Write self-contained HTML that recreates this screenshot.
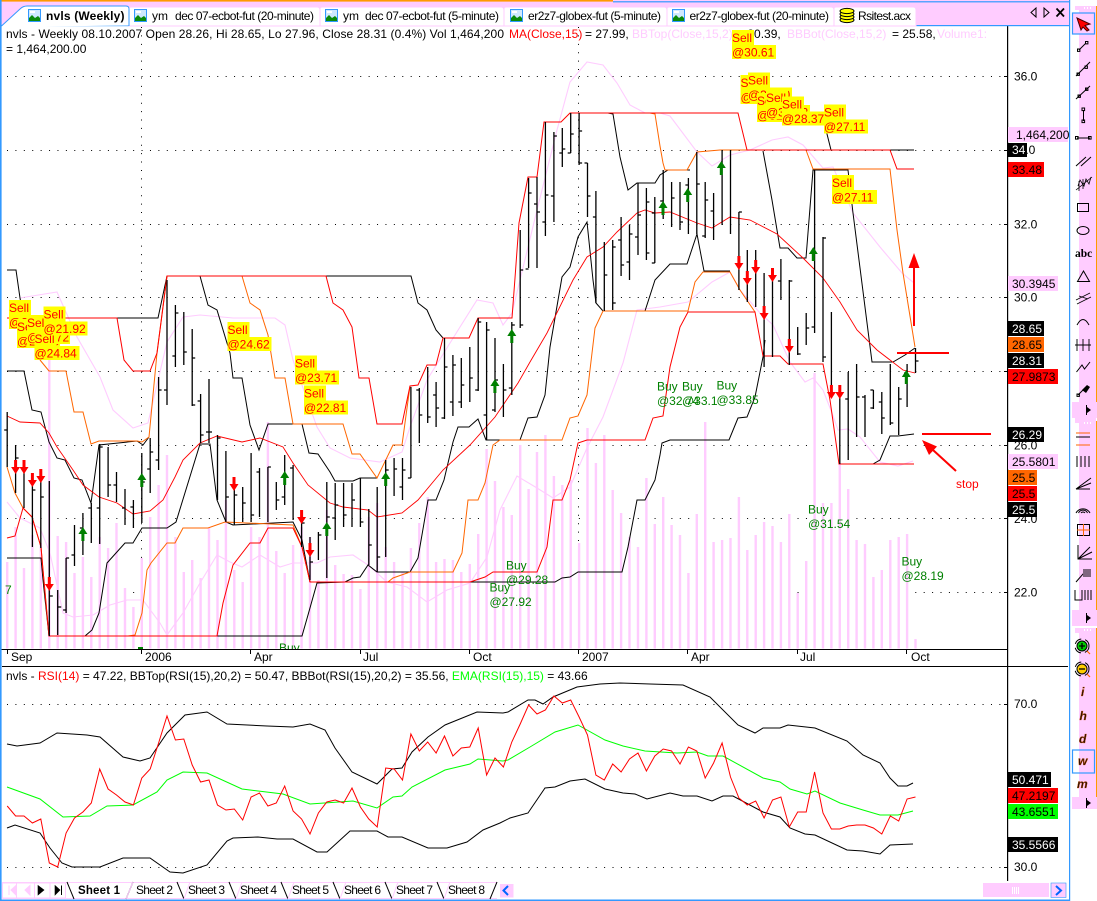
<!DOCTYPE html>
<html><head><meta charset="utf-8"><title>nvls (Weekly)</title>
<style>
html,body{margin:0;padding:0;background:#fff;width:1097px;height:901px;overflow:hidden}
svg{position:absolute;left:0;top:0;display:block}
text{font-family:"Liberation Sans",sans-serif;font-size:12px;fill:#000}
.l{fill:none;stroke-linejoin:miter}
.k{stroke:#000;stroke-width:1}
.r{stroke:#f00;stroke-width:1}
.o{stroke:#f60;stroke-width:1}
.p{stroke:#fcf;stroke-width:1.1}
.g{stroke:#0f0;stroke-width:1}
.s{fill:#f00}.b{fill:#008000}
.y{fill:#ff0}
.ic{fill:none;stroke:#000;stroke-width:1}
</style></head><body>
<svg width="1097" height="901" viewBox="0 0 1097 901" xmlns="http://www.w3.org/2000/svg">
<defs>
<polygon id="ad" points="-1.5,0 1.5,0 1.5,7 4.5,7 0,14 -4.5,7 -1.5,7" fill="#f00"/>
<polygon id="au" points="0,0 4.5,7 1.5,7 1.5,14 -1.5,14 -1.5,7 -4.5,7" fill="#008000"/>
<g id="tic"><rect x="0.5" y="0.5" width="12" height="12" fill="#cfe8ff" stroke="#39f"/><polygon points="1,12 1,9 4,6 7,9 10,7 12,9 12,12" fill="#0a8a0a"/><rect x="2" y="2" width="5" height="2" fill="#fff"/></g>
</defs>
<rect width="1097" height="901" fill="#fff"/>

<!-- grid -->
<g stroke="#000" stroke-width="1" stroke-dasharray="1 7.41" fill="none">
<path d="M7 76.5H1004M7 150.5H1004M7 224.5H1004M7 297.5H1004M7 371.5H1004M7 445.5H1004M7 518.5H1004M7 592.5H1004M7 704.5H1004M7 867.5H1004"/>
<path d="M141.5 27V649M578.5 27V649"/>
</g>

<!-- volume -->
<path fill="none" stroke="#fcf" stroke-width="2.4" d="M7.2 562V648.5M15.6 527V648.5M24 568V648.5M32.4 535V648.5M40.8 543V648.5M49.3 350V648.5M57.7 536V648.5M66.1 542V648.5M74.5 573V648.5M82.9 557V648.5M91.3 577V648.5M99.7 537V648.5M108.1 548V648.5M116.5 523V648.5M125 588V648.5M133.4 607V648.5M141.8 558V648.5M150.2 517V648.5M158.6 485V648.5M167 455V648.5M175.4 537V648.5M183.8 572V648.5M192.2 560V648.5M200.6 578V648.5M209 528V648.5M217.5 540V648.5M225.9 500V648.5M234.3 570V648.5M242.7 582V648.5M251.1 527V648.5M259.5 537V648.5M267.9 422V648.5M276.3 551V648.5M284.7 573V648.5M293.1 545V648.5M301.6 527V648.5M310 537V648.5M318.4 580V648.5M326.8 510V648.5M335.2 565V648.5M343.6 574V648.5M352 575V648.5M360.4 589V648.5M368.8 517V648.5M377.2 503V648.5M385.7 547V648.5M394.1 562V648.5M402.5 572V648.5M410.9 548V648.5M419.3 523V648.5M427.7 497V648.5M436.1 562V648.5M444.5 559V648.5M452.9 560V648.5M461.3 572V648.5M469.8 564V648.5M478.2 534V648.5M486.6 449V648.5M495 481V648.5M503.4 507V648.5M511.8 515V648.5M520.2 445V648.5M528.6 489V648.5M537 452V648.5M545.4 435V648.5M553.9 476V648.5M562.3 485V648.5M570.7 480V648.5M579.1 543V648.5M587.5 428V648.5M595.9 463V648.5M604.3 435V648.5M612.7 490V648.5M621.1 513V648.5M629.5 537V648.5M638 547V648.5M646.4 478V648.5M654.8 524V648.5M663.2 497V648.5M671.6 525V648.5M680 535V648.5M688.4 573V648.5M696.8 514V648.5M705.2 422V648.5M713.6 542V648.5M722.1 540V648.5M730.5 538V648.5M738.9 497V648.5M747.3 550V648.5M755.7 535V648.5M764.1 522V648.5M772.5 526V648.5M780.9 542V648.5M789.3 514V648.5M797.7 593V648.5M806.2 561V648.5M814.6 373V648.5M823 503V648.5M831.4 503V648.5M839.8 463V648.5M848.2 489V648.5M856.6 540V648.5M865 544V648.5M873.4 577V648.5M881.8 570V648.5M890.3 540V648.5M898.7 537V648.5M907.1 534V648.5M915.5 639V648.5"/>

<!-- pink bands -->
<polyline class="l p" points="20,298 57,292 77,337 100,377 113,410 133,428 148,423 167,342 183,317 200,315 233,318 275,318 285,325 293,360 317,427 330,448 350,458 380,462 402,452 410,427 427,380 460,327 477,300 493,303 503,325 512,313 520,280 537,210 557,130 570,82 587,62 603,65 617,83 630,105 645,113 660,113 670,116 697,152 712,166 730,155 750,150 772,140 788,137 803,145 823,168 833,167 853,213 880,247 902,273 914,283"/>
<polyline class="l p" points="7,502 20,518 40,528 50,553 63,613 73,617 93,615 110,605 127,600 143,600 160,623 167,635 183,613 200,583 217,555 230,562 242,567 260,555 280,567 293,563 317,563 330,557 353,555 368,565 387,582 407,587 427,602 447,590 470,583 487,557 500,510 517,476 537,488 553,498 570,487 587,448 603,417 623,363 637,310 660,307 688,302 712,282 730,272 740,290 760,313 773,325 790,362 805,382 813,378 823,390 832,413 838,430 848,429 860,437 880,462 898,466 913,461"/>

<!-- black bands -->
<polyline class="l k" points="7,270 16,270 20,298 24,318 117,318 158,318 167,276 200,276 208,305 217,310 230,353 233,378 242,378 250,425 259,450 268,424 302,424 309,453 318,454 330,472 335,481 353,481 360,478 377,478"/>
<polyline class="l k" points="326,276 411,276 418,303 427,310 436,330 443,338"/>
<polyline class="l k" points="7,371 24,371 32,410 41,412 49,442 57,458 65,460 74,478 82,480 91,503 99,445 137,441 143,445 149,437"/>
<polyline class="l k" points="7,558 41,558 43,580 49,636 85,636 92,630 99,613 107,563 125,543 133,543 142,528 167,528 176,522 200,444 210,444 217,500 226,522 233,525 293,522 302,540 310,582"/>
<polyline class="l k" points="217,636 302,636 308,615 317,583 345,582 353,578 360,577 368,565 377,572 410,572 418,558 428,500 436,500 444,480 453,442 458,427 469,427 478,419 486,440 520,440 528,418 537,417 545,395 550,347 562,277 570,267 578,237 587,222 593,280 596,303 603,311 645,311 655,280 670,264 687,264 697,234 704,271 730,271"/>
<polyline class="l k" points="470,582 555,582 562,578 570,577 578,572 622,572 628,547 637,500 645,500 655,480 660,455 662,443 670,440 729,440 738,418 747,417 755,397 763,357 765,340"/>
<polyline class="l k" points="873,464 880,460 890,436 898,436 914,434"/>
<polyline class="l k" points="608,113 613,114 620,157 628,190 637,183 655,183 660,175 668,170 690,170"/>
<polyline class="l k" points="763,151 772,200 780,248 788,248 797,258 806,258 813,170 848,170 853,213 872,362 893,362 905,355 915,348"/>
<polyline class="l k" points="826,130 831,150 914,150"/>

<!-- orange -->
<polyline class="l o" points="7,467 15,493 23,508 32,517 41,547 43,570 49,636"/>
<polyline class="l o" points="40,360 49,371 66,371 74,412 83,412 91,444 99,441 137,441 142,442 149,437 157,353 167,276"/>
<polyline class="l o" points="242,276 250,303 260,310 268,335 275,378 285,378 293,424 343,424 352,454 360,454 377,478 393,445 402,445 410,386"/>
<polyline class="l o" points="128,636 135,635 142,613 147,570 151,563 167,543 175,543 183,528 208,528 225,522 293,525 302,547 310,582"/>
<polyline class="l o" points="388,582 393,578 410,572 453,572 462,553 468,500 478,500 485,483 493,445 500,440 562,440 570,418 578,416 587,395 595,328 603,311 660,311 688,311 695,282 703,272 730,272 740,290 755,312"/>
<polyline class="l o" points="650,113 655,114 660,146 663,163 665,170 687,170 697,152 720,150 747,150"/>
<polyline class="l o" points="806,150 813,169 890,169 897,230 903,273 915,347"/>

<!-- red bands -->
<polyline class="l r" points="7,538 15,536 23,508 32,517 41,547 43,570 49,636 217,636 223,603 233,565 250,543 260,543 268,528 293,528 302,547 310,582 470,582 485,577 493,572 537,572 547,547 553,500 562,500 570,480 578,443 587,440 645,440 653,418 663,416 670,367 680,327 688,312 755,312 763,356 780,356 788,364 823,364 830,400 839,464 914,464"/>
<polyline class="l r" points="7,318 117,318 124,360 133,371 150,371 157,353 167,276 326,276 333,303 343,310 352,327 359,378 369,378 377,424 402,424 410,386 418,385 427,365 436,365 443,338 469,338 478,318 512,318 515,278 519,223 528,177 537,177 544,122 561,122 570,113 738,113 747,150 890,150 897,169 914,169"/>
<polyline class="l" stroke="#f00" stroke-width=".9" points="7,416 20,422 40,423 49,433 57,447 73,470 83,485 99,497 117,503 133,514 150,511 163,500 175,477 183,460 200,443 217,436 242,442 260,438 283,447 293,463 308,485 330,503 343,507 368,510 377,517 402,513 418,500 443,470 470,445 495,417 518,383 530,362 547,333 573,280 587,257 603,247 617,232 637,213 645,210 655,213 670,212 697,223 712,228 730,217 750,220 777,234 803,258 823,278 840,302 857,330 877,350 903,370 915,373"/>

<!-- price bars -->
<path fill="none" stroke="#000" stroke-width="1.3" d="M7.2 412V467M7.2 430h-3M15.6 445V493M15.6 458h3M24 460V508M32.4 473V547M32.4 490h3M40.8 470V548M40.8 497h3M49.3 481V636M49.3 596h3.5M57.7 590V635M57.7 607h3.5M66.1 558V613M66.1 610h-3M66.1 558h3M74.5 525V566M74.5 555h-3M82.9 513V555M82.9 528h-3M91.3 503V543M91.3 508h-3M99.7 444V544M99.7 508h-3M99.7 447h3M108.1 447V497M108.1 485h3M116.5 472V502M116.5 485h-3M125 489V525M125 508h-3M133.4 500V528M133.4 507h-3M141.8 453V523M141.8 482h3M150.2 438V493M150.2 469h-3M150.2 452h3M158.6 377V470M158.6 460h-3M158.6 390h3M167 280V405M167 390h-3M175.4 305V367M175.4 313h3M175.4 356h-3M183.8 312V365M183.8 352h3M192.2 329V406M192.2 358h3M192.2 405h3M200.6 394V443M200.6 401h-3M200.6 435h3M209 379V443M209 432h-3M209 432h3M217.5 435V500M217.5 438h3M225.9 451V522M225.9 497h3M234.3 487V525M234.3 495h3M242.7 487V522M242.7 503h3M251.1 453V522M251.1 515h3M259.5 468V517M259.5 472h-3M267.9 467V522M267.9 467h3M276.3 482V510M276.3 500h3M284.7 455V505M284.7 497h-3M293.1 465V520M293.1 468h-3M301.6 515V547M301.6 523h3M310 537V580M310 562h3M318.4 532V560M318.4 535h3M326.8 482V578M326.8 517h3M335.2 483V540M335.2 505h3M335.2 518h-3M343.6 483V527M343.6 515h3M352 483V527M352 500h3M360.4 478V527M360.4 522h3M368.8 509V565M368.8 545h3M377.2 487V572M377.2 557h3M385.7 460V557M385.7 470h3M394.1 458V496M394.1 469h3M402.5 458V500M402.5 487h-3M402.5 470h3M410.9 387V478M410.9 478h-3M419.3 388V443M419.3 415h3M419.3 390h-3M427.7 367V423M427.7 417h3M436.1 382V427M436.1 408h3M436.1 395h-3M444.5 338V419M444.5 367h3M444.5 418h-3M452.9 355V416M452.9 402h-3M452.9 365h3M461.3 358V408M461.3 385h3M461.3 402h-3M469.8 347V402M469.8 378h3M478.2 318V391M478.2 322h3M478.2 390h-3M486.6 322V440M486.6 330h3M486.6 415h-3M495 338V412M495 380h3M495 410h-3M503.4 364V417M503.4 390h3M511.8 322V395M511.8 325h3M511.8 388h-3M520.2 230V328M520.2 325h3M520.2 270h3M528.6 178V268M528.6 193h3M528.6 269h-3M537 177V268M537 204h-3M537 212h3M545.4 122V236M545.4 195h3M545.4 222h-3M553.9 132V222M553.9 136h3M553.9 196h-3M562.3 128V167M562.3 149h3M562.3 153h-3M570.7 113V153M570.7 134h3M570.7 153h-3M579.1 113V165M579.1 131h3M579.1 163h3M587.5 163V217M587.5 163h-3M587.5 196h3M595.9 191V303M595.9 217h-3M604.3 242V311M604.3 275h3M612.7 240V310M612.7 247h3M612.7 303h3M621.1 217V276M621.1 240h-3M621.1 265h3M629.5 225V280M629.5 234h3M629.5 262h-3M638 183V255M638 237h-3M638 215h3M646.4 188V260M646.4 202h3M646.4 253h3M654.8 197V263M654.8 213h-3M654.8 263h-3M663.2 170V219M663.2 201h-3M671.6 182V227M671.6 198h3M680 182V230M680 222h3M688.4 178V234M688.4 185h-3M696.8 152V234M696.8 184h3M705.2 182V238M705.2 236h-3M705.2 200h3M713.6 193V240M713.6 211h-3M722.1 150V225M730.5 150V234M738.9 212V290M738.9 212h3M747.3 250V302M755.7 250V307M764.1 273V367M772.5 275V357M780.9 259V300M780.9 281h-3M789.3 280V365M789.3 281h3M797.7 327V355M797.7 354h3M806.2 313V345M806.2 328h3M814.6 170V333M814.6 327h-3M823 237V362M823 238h3M823 357h3M831.4 312V398M839.8 387V464M848.2 372V460M848.2 399h-3M856.6 364V437M856.6 397h3M865 395V437M865 397h-3M873.4 390V409M873.4 390h-3M873.4 408h-3M881.8 392V434M881.8 418h3M881.8 402h-3M890.3 364V425M890.3 423h3M898.7 387V435M898.7 399h3M907.1 364V407M907.1 373h-3M915.5 348V373M915.5 361h3"/>

<!-- signal arrows -->
<use href="#ad" x="15.6" y="460"/><use href="#ad" x="24" y="460"/><use href="#ad" x="32.4" y="473"/><use href="#ad" x="40.8" y="469"/><use href="#ad" x="49.3" y="577"/><use href="#ad" x="234" y="477"/><use href="#ad" x="301.6" y="510"/><use href="#ad" x="310" y="543"/><use href="#ad" x="738.9" y="256"/><use href="#ad" x="747.3" y="271"/><use href="#ad" x="755.7" y="260"/><use href="#ad" x="772.5" y="268"/><use href="#ad" x="764.1" y="306"/><use href="#ad" x="789.3" y="339"/><use href="#ad" x="831.4" y="385"/><use href="#ad" x="839.8" y="385"/>
<use href="#au" x="82.9" y="527"/><use href="#au" x="141.8" y="473"/><use href="#au" x="284.7" y="471"/><use href="#au" x="326.8" y="522"/><use href="#au" x="385.7" y="472"/><use href="#au" x="494.9" y="379"/><use href="#au" x="511.8" y="329"/><use href="#au" x="663" y="201"/><use href="#au" x="687.7" y="188"/><use href="#au" x="721.3" y="161"/><use href="#au" x="813.3" y="247"/><use href="#au" x="906.3" y="370"/>

<!-- hand drawn annotations -->
<g fill="#f00" stroke="none">
<rect x="913" y="266" width="2" height="60"/><polygon points="914,253 919.5,268 908.5,268"/>
<rect x="897" y="352" width="52" height="2"/>
<rect x="922" y="433" width="69" height="2"/>
<polygon points="922,440 937,446.5 929,455"/>
</g>
<path d="M933 450L956 471" stroke="#f00" stroke-width="2" fill="none"/>
<text x="956" y="488" style="fill:#f00">stop</text>

<!-- legend -->
<text x="6" y="38" textLength="498">nvls - Weekly 08.10.2007 Open 28.26, Hi 28.65, Lo 27.96, Close 28.31 (0.4%) Vol 1,464,200</text>
<text x="509" y="38" style="fill:#f00">MA(Close,15)</text>
<text x="585" y="38">= 27.99,</text>
<text x="632" y="38" style="fill:#fcf">BBTop(Close,15,2)</text>
<text x="737" y="38">= 30.39,</text>
<text x="787" y="38" style="fill:#fcf">BBBot(Close,15,2)</text>
<text x="892" y="38">= 25.58,</text>
<text x="937" y="38" style="fill:#fcf">Volume1:</text>
<text x="6" y="53">= 1,464,200.00</text>

<!-- Sell labels -->
<g transform="translate(9,300)"><rect class="y" width="22" height="15"/><rect class="y" y="15" width="43" height="14"/><text class="s" y="12">Sell</text><text class="s" y="26.5">@21.93</text></g>
<g transform="translate(17,319)"><rect class="y" width="22" height="15"/><rect class="y" y="15" width="43" height="14"/><text class="s" y="12">Sell</text><text class="s" y="26.5">@23.45</text></g>
<g transform="translate(27,315)"><rect class="y" width="22" height="15"/><rect class="y" y="15" width="43" height="14"/><text class="s" y="12">Sell</text><text class="s" y="26.5">@25.72</text></g>
<g transform="translate(34.5,331)"><rect class="y" width="22" height="15"/><rect class="y" y="15" width="45" height="14"/><text class="s" y="12">Sell</text><text class="s" y="26.5">@24.84</text></g>
<g transform="translate(43.5,306.5)"><rect class="y" width="22" height="15"/><rect class="y" y="15" width="44" height="14"/><text class="s" y="12">Sell</text><text class="s" y="26.5">@21.92</text></g>
<g transform="translate(227.5,322)"><rect class="y" width="22" height="15"/><rect class="y" y="15" width="44" height="14"/><text class="s" y="12">Sell</text><text class="s" y="26.5">@24.62</text></g>
<g transform="translate(295,355.5)"><rect class="y" width="22" height="15"/><rect class="y" y="15" width="44" height="14"/><text class="s" y="12">Sell</text><text class="s" y="26.5">@23.71</text></g>
<g transform="translate(304,385.5)"><rect class="y" width="22" height="15"/><rect class="y" y="15" width="44" height="14"/><text class="s" y="12">Sell</text><text class="s" y="26.5">@22.81</text></g>
<g transform="translate(732,30)"><rect class="y" width="22" height="15"/><rect class="y" y="15" width="44" height="14"/><text class="s" y="12">Sell</text><text class="s" y="26.5">@30.61</text></g>
<g transform="translate(740.5,75)"><rect class="y" width="22" height="15"/><rect class="y" y="15" width="44" height="14"/><text class="s" y="12">Sell</text><text class="s" y="26.5">@30.39</text></g>
<g transform="translate(748,72.5)"><rect class="y" width="22" height="15"/><rect class="y" y="15" width="44" height="14"/><text class="s" y="12">Sell</text><text class="s" y="26.5">@31.20</text></g>
<g transform="translate(757,93)"><rect class="y" width="22" height="15"/><rect class="y" y="15" width="44" height="14"/><text class="s" y="12">Sell</text><text class="s" y="26.5">@31.58</text></g>
<g transform="translate(766,90)"><rect class="y" width="22" height="15"/><rect class="y" y="15" width="44" height="14"/><text class="s" y="12">Sell</text><text class="s" y="26.5">@30.02</text></g>
<g transform="translate(782,96.5)"><rect class="y" width="22" height="15"/><rect class="y" y="15" width="44" height="14"/><text class="s" y="12">Sell</text><text class="s" y="26.5">@28.37</text></g>
<g transform="translate(824,104.5)"><rect class="y" width="22" height="15"/><rect class="y" y="15" width="44" height="14"/><text class="s" y="12">Sell</text><text class="s" y="26.5">@27.11</text></g>
<g transform="translate(832,175)"><rect class="y" width="22" height="15"/><rect class="y" y="15" width="45" height="14"/><text class="s" y="12">Sell</text><text class="s" y="26.5">@27.11</text></g>

<!-- Buy labels -->
<g transform="translate(506,557.5)"><text class="b" y="12">Buy</text><text class="b" y="26.5">@29.28</text></g>
<g transform="translate(489.5,579.5)"><text class="b" y="12">Buy</text><text class="b" y="26.5">@27.92</text></g>
<g transform="translate(657,378.5)"><text class="b" y="12">Buy</text><text class="b" y="26.5">@32.74</text></g>
<g transform="translate(682,378.5)"><text class="b" y="12">Buy</text><text class="b" y="26.5">@33.1</text></g>
<g transform="translate(716.5,377.5)"><text class="b" y="12">Buy</text><text class="b" y="26.5">@33.85</text></g>
<g transform="translate(808,501.5)"><text class="b" y="12">Buy</text><text class="b" y="26.5">@31.54</text></g>
<g transform="translate(901.5,553.5)"><text class="b" y="12">Buy</text><text class="b" y="26.5">@28.19</text></g>
<text class="b" x="5" y="594">7</text>
<g><clipPath id="cb"><rect x="270" y="630" width="40" height="19"/></clipPath><text class="b" x="279" y="652" clip-path="url(#cb)">Buy</text></g>

<!-- frame lines, time axis -->
<rect x="1" y="649" width="1006" height="1" fill="#000"/>
<rect x="2" y="666" width="1066" height="1" fill="#000"/>
<rect x="1007" y="25" width="1.2" height="856" fill="#000"/>
<path stroke="#000" fill="none" d="M7.5 649V654M141.5 649V654M250.5 649V654M360.5 649V654M469.5 649V654M578.5 649V654M687.5 649V654M797.5 649V654M906.5 649V654"/>
<rect x="138" y="647" width="5" height="2" fill="#008000"/>
<text x="11" y="661">Sep</text><text x="145" y="661">2006</text><text x="254" y="661">Apr</text><text x="363" y="661">Jul</text><text x="473" y="661">Oct</text><text x="582" y="661">2007</text><text x="691" y="661">Apr</text><text x="800" y="661">Jul</text><text x="911" y="661">Oct</text>

<!-- RSI pane -->
<text y="680" x="6">nvls - <tspan style="fill:#f00">RSI(14)</tspan> = 47.22, BBTop(RSI(15),20,2) = 50.47, BBBot(RSI(15),20,2) = 35.56, <tspan style="fill:#0f0">EMA(RSI(15),15)</tspan> = 43.66</text>
<polyline class="l k" points="7,744 17,746 40,743 57,733 87,735 100,737 123,757 140,761 150,758 167,733 185,715 207,712 227,724 267,726 293,727 310,724 325,730 335,748 352,772 377,784 392,769 402,768 412,752 428,737 445,725 477,712 503,713 508,712 528,700 535,700 543,704 553,697 577,687 600,684 620,683 650,684 683,685 710,697 738,725 755,733 763,728 780,728 788,725 815,728 847,741 863,755 880,763 890,778 898,786 907,786 913,783"/>
<polyline class="l k" points="7,828 15,825 40,833 50,848 62,863 72,867 100,867 123,858 150,858 170,872 183,873 207,865 227,841 233,838 258,837 277,839 293,839 317,852 327,852 350,831 377,831 388,837 402,837 428,848 447,848 467,842 483,830 500,823 510,818 528,813 545,788 555,787 570,781 585,779 605,789 623,793 635,794 647,799 670,793 683,796 697,796 712,801 723,796 733,796 763,812 780,817 790,828 805,834 815,835 847,850 863,851 880,854 890,845 913,844"/>
<polyline class="l g" points="7,787 40,799 63,817 90,816 107,806 133,805 157,792 167,780 183,772 207,773 242,789 283,794 310,804 353,801 377,808 393,797 402,796 412,787 445,770 470,764 478,759 503,761 508,760 530,747 555,732 578,725 605,740 623,746 645,751 677,753 697,752 708,756 723,756 763,778 780,782 790,789 807,794 815,791 840,803 863,810 880,815 898,815 913,811"/>
<polyline class="l" stroke="#f00" stroke-width="1" points="7.2,806 15.6,816 24,816 32.4,823 40.8,819 49.3,863 57.7,867 66.1,833 74.5,818 82.9,812 91.3,803 99.7,769 108.1,789 116.5,795 125,802 133.4,805 141.8,778 150.2,769 158.6,743 167,716 175.4,740 183.8,739 192.2,765 200.6,782 209,780 217.5,805 225.9,810 234.3,809 242.7,820 251.1,797 259.5,793 267.9,806 276.3,803 284.7,786 293.1,811 301.6,819 310,834 318.4,813 326.8,802 335.2,800 343.6,803 352,788 360.4,807 368.8,819 377.2,827 385.7,768 394.1,769 402.5,780 410.9,734 419.3,751 427.7,742 436.1,753 444.5,736 452.9,756 461.3,748 469.8,747 478.2,728 486.6,775 495,758 503.4,767 511.8,742 520.2,724 528.6,705 537,714 545.4,710 553.9,696 562.3,703 570.7,700 579.1,717 587.5,735 595.9,775 604.3,780 612.7,764 621.1,772 629.5,759 638,753 646.4,771 654.8,756 663.2,749 671.6,751 680,764 688.4,747 696.8,751 705.2,778 713.6,763 722.1,743 730.5,777 738.9,798 747.3,805 755.7,801 764.1,818 772.5,800 780.9,797 789.3,827 797.7,812 806.2,812 814.6,772 823,813 831.4,829 839.8,829 848.2,826 856.6,825 865,825 873.4,828 881.8,834 890.3,816 898.7,821 907.1,799 915.5,797"/>

<!-- axis ticks -->
<path stroke="#000" fill="none" d="M1004 76.5h3M1004 150.5h3M1004 224.5h3M1004 297.5h3M1004 371.5h3M1004 445.5h3M1004 518.5h3M1004 592.5h3M1004 704.5h3M1004 867.5h3"/>
<!-- axis values -->
<text x="1014" y="80.5">36.0</text><text x="1014" y="228.5">32.0</text><text x="1014" y="301.5">30.0</text><text x="1014" y="449.5">26.0</text><text x="1014" y="523">24.0</text><text x="1014" y="596.5">22.0</text><text x="1014" y="708">70.0</text><text x="1014" y="871">30.0</text>
<text x="1012" y="154">34.0</text>
<!-- value flags -->
<rect x="1008" y="127" width="60" height="15" fill="#fcf"/><text x="1016" y="139">1,464,200</text>
<rect x="1008" y="143" width="19" height="14" fill="#000"/><text x="1012" y="154" style="fill:#fff">34</text>
<rect x="1008" y="162" width="36" height="15" fill="#f00"/><text x="1012" y="174">33.48</text>
<rect x="1008" y="276" width="50" height="15" fill="#fcf"/><text x="1012" y="288">30.3945</text>
<rect x="1008" y="321" width="36" height="15" fill="#000"/><text x="1012" y="333" style="fill:#fff">28.65</text>
<rect x="1008" y="337" width="36" height="15" fill="#f60"/><text x="1012" y="349">28.65</text>
<rect x="1008" y="353" width="36" height="15" fill="#000"/><text x="1012" y="365" style="fill:#fff">28.31</text>
<rect x="1008" y="369" width="50" height="15" fill="#f00"/><text x="1012" y="381">27.9873</text>
<rect x="1008" y="427" width="36" height="15" fill="#000"/><text x="1012" y="439" style="fill:#fff">26.29</text>
<rect x="1008" y="454" width="50" height="15" fill="#fcf"/><text x="1012" y="466">25.5801</text>
<rect x="1008" y="470" width="29" height="15" fill="#f60"/><text x="1012" y="482">25.5</text>
<rect x="1008" y="486" width="29" height="15" fill="#f00"/><text x="1012" y="498">25.5</text>
<rect x="1008" y="502" width="29" height="15" fill="#000"/><text x="1012" y="514" style="fill:#fff">25.5</text>
<rect x="1008" y="772" width="43" height="15" fill="#000"/><text x="1012" y="784" style="fill:#fff">50.471</text>
<rect x="1008" y="788" width="50" height="15" fill="#f00"/><text x="1012" y="800">47.2197</text>
<rect x="1008" y="804" width="50" height="15" fill="#0f0"/><text x="1012" y="816">43.6551</text>
<rect x="1008" y="837" width="50" height="15" fill="#000"/><text x="1012" y="849" style="fill:#fff">35.5566</text>

<!-- top tab strip -->
<rect x="0" y="0" width="1070" height="25" fill="#fcf"/>
<rect x="0" y="0" width="613" height="1.6" fill="#f90"/>
<rect x="613" y="1.2" width="456" height="1.2" fill="#39f"/>
<rect x="0" y="25" width="1069" height="1.2" fill="#39f"/>
<g fill="#fff" stroke="#fcf">
<path d="M129 26V8.5Q129 7 131 7H317Q320 7 320 10V26Z"/>
<path d="M320 26V8.5Q320 7 322 7H501Q504 7 504 10V26Z"/>
<path d="M504 26V8.5Q504 7 506 7H664Q667 7 667 10V26Z"/>
<path d="M667 26V8.5Q667 7 669 7H831Q834 7 834 10V26Z"/>
<path d="M834 26V8.5Q834 7 836 7H913Q916 7 916 10V26Z"/>
</g>
<path d="M1.5 26L20 9Q23 6 27 6H126Q129 6 129 9V25.5H128L2 27Z" fill="#fff"/>
<path d="M1.5 26L20 9Q23 6 27 6H126Q129 6 129 9V26" fill="none" stroke="#39f"/>
<use href="#tic" x="28" y="9"/><use href="#tic" x="134" y="9"/><use href="#tic" x="325" y="9"/><use href="#tic" x="510" y="9"/><use href="#tic" x="672" y="9"/>
<g fill="#ff0" stroke="#000" stroke-width="1"><ellipse cx="847" cy="20" rx="7" ry="2.6"/><ellipse cx="847" cy="17" rx="7" ry="2.6"/><ellipse cx="847" cy="14" rx="7" ry="2.6"/><ellipse cx="847" cy="11" rx="7" ry="2.6"/></g>
<text x="46" y="20" style="font-weight:bold" textLength="78.5">nvls (Weekly)</text>
<text x="152" y="20">ym</text><text x="175" y="20" textLength="139">dec 07-ecbot-fut (20-minute)</text>
<text x="343" y="20">ym</text><text x="365" y="20" textLength="134">dec 07-ecbot-fut (5-minute)</text>
<text x="528" y="20" textLength="133">er2z7-globex-fut (5-minute)</text>
<text x="689.5" y="20" textLength="139.5">er2z7-globex-fut (20-minute)</text>
<text x="858" y="20" textLength="53">Rsitest.acx</text>
<g fill="none" stroke="#000"><path d="M1036 8L1031 12.5L1036 17Z"/><path d="M1044 8L1049 12.5L1044 17Z"/><path d="M1056.5 8.5L1064 16.5M1064 8.5L1056.5 16.5" stroke-width="1.8"/></g>

<!-- frame -->
<rect x="0" y="0" width="1.6" height="901" fill="#39f"/>
<rect x="1069" y="0" width="1.2" height="901" fill="#39f"/>
<rect x="0" y="899.5" width="1070" height="1.5" fill="#39f"/>

<!-- bottom sheet tabs -->
<rect x="2" y="881" width="1067" height="18" fill="#fff"/>
<rect x="2" y="882" width="495" height="1" fill="#fcf"/><rect x="2" y="898" width="495" height="1" fill="#fcf"/>
<g fill="none" stroke="#fcf"><rect x="2.5" y="883" width="63" height="15"/><path d="M16.5 883V898M34.5 883V898M50 883V898"/></g>
<path d="M9 885.5V895M16 885.5L11 890L16 895Z M30 885.5L25 890L30 895Z" fill="#fcf" stroke="#fcf"/>
<path d="M38 885.5L44 890L38 895Z M55 885.5L60 890L55 895Z" fill="#000" stroke="#000" stroke-width=".6"/><path d="M61.5 885.5V895" stroke="#000"/>
<path fill="none" stroke="#000" d="M67 882L74 899M126 899L133 882M177 882L184 899M229 882L236 899M281 882L288 899M333 882L340 899M385 882L392 899M437 882L444 899M490 899L497 882"/>
<path fill="none" stroke="#fcf" d="M133 882L126 899M184 899L190 882M236 899L242 882M288 899L294 882M340 899L346 882M392 899L398 882M444 899L450 882"/>
<text x="78" y="894" style="font-size:11.5px;font-weight:bold" textLength="42">Sheet 1</text>
<text x="136" y="894" textLength="37">Sheet 2</text><text x="188" y="894" textLength="37">Sheet 3</text><text x="240" y="894" textLength="37">Sheet 4</text><text x="292" y="894" textLength="37">Sheet 5</text><text x="344" y="894" textLength="37">Sheet 6</text><text x="396" y="894" textLength="37">Sheet 7</text><text x="448" y="894" textLength="37">Sheet 8</text>
<rect x="500" y="884" width="13.5" height="13.5" fill="#fcf"/><path d="M508 886L503.5 890.5L508 895" fill="none" stroke="#06f" stroke-width="2"/>
<rect x="983" y="883" width="66" height="14" fill="#fcf"/>
<path d="M1012.5 887V894M1014.5 887V894M1016.5 887V894M1018.5 887V894" stroke="#fff"/>
<rect x="1051" y="883" width="15" height="14.5" fill="#fcf" stroke="#39f" stroke-width=".6"/><path d="M1056 886L1061 890.5L1056 895" fill="none" stroke="#06f" stroke-width="2"/>

<!-- right toolbars -->
<rect x="1075" y="6" width="21" height="4" fill="#fcf"/><rect x="1079" y="6" width="17" height="396" fill="#fcf"/><rect x="1096" y="6" width="1" height="396" fill="#f90"/>
<path d="M1084 8h1M1087 8h1M1090 8h1" stroke="#fff" stroke-width="2"/>
<rect x="1072" y="402" width="25" height="16" fill="#fcf"/>
<rect x="1075" y="418" width="21" height="5" fill="#fcf"/><rect x="1079" y="421" width="17" height="189" fill="#fcf"/><rect x="1096" y="421" width="1" height="189" fill="#f90"/>
<path d="M1084 423h1M1087 423h1M1090 423h1" stroke="#fff" stroke-width="2"/>
<rect x="1072" y="610" width="25" height="16" fill="#fcf"/>
<rect x="1075" y="628" width="21" height="5" fill="#fcf"/><rect x="1079" y="628" width="17" height="169" fill="#fcf"/><rect x="1096" y="628" width="1" height="169" fill="#f90"/>
<path d="M1084 630h1M1087 630h1M1090 630h1" stroke="#fff" stroke-width="2"/>
<rect x="1072" y="797" width="25" height="12" fill="#fcf"/>
<g fill="#000"><path d="M1087 407V413L1091 410Z"/><rect x="1086" y="405" width="1" height="10"/><path d="M1087 615V621L1091 618Z"/><rect x="1086" y="613" width="1" height="10"/><path d="M1087 800V806L1091 803Z"/><rect x="1086" y="798" width="1" height="10"/></g>

<rect x="1072.5" y="13" width="22" height="21" fill="#fcf" stroke="#39f" stroke-width="1.2"/>
<path d="M1077 18L1090 24L1085 25.5L1089 30L1087 31L1083 27L1081 30Z" fill="#f00" stroke="#400" stroke-width="1"/>

<g class="ic">
<path d="M1079 50L1086 43"/><rect x="1077.5" y="49" width="2.4" height="2.4"/><rect x="1085.5" y="41.5" width="2.4" height="2.4"/>
<path d="M1076 76L1090 62"/><rect x="1077" y="73" width="2.4" height="2.4"/><rect x="1085" y="66" width="2.4" height="2.4"/>
<path d="M1076 99L1090 86"/><rect x="1078" y="95" width="2.4" height="2.4"/><rect x="1085.5" y="88" width="2.4" height="2.4"/>
<path d="M1083.5 110V121"/><rect x="1082" y="108" width="2.6" height="2.6"/><rect x="1082" y="120" width="2.6" height="2.6"/>
<path d="M1077 138H1090"/><rect x="1075.5" y="136.5" width="2.6" height="2.6"/><rect x="1088.5" y="136.5" width="2.6" height="2.6"/>
<path d="M1076 166L1086 157M1081 166L1091 157"/>
<path d="M1076 190L1092 177M1078 186L1080 180L1084 186L1086 179L1089 184L1091 177M1079 191V181M1083 189V179" stroke-width=".8"/>
<rect x="1077.5" y="203.5" width="11" height="8"/>
<ellipse cx="1083" cy="230.5" rx="6" ry="4"/>
<path d="M1077.5 281.5L1083.5 271L1089.5 281.5Z"/>
<path d="M1076 300L1090 293M1077 304L1091 297M1079 296L1088 299" stroke-width=".8"/>
<path d="M1077 325Q1083 314 1089 325"/>
<path d="M1077 339V351M1083 339V351M1089 339V351M1075 345H1091" stroke-width=".9"/>
<path d="M1076.5 372L1082 365L1084.5 369L1090 362"/>
<path d="M1078 395L1086 387"/><rect x="1077" y="394" width="2.4" height="2.4"/>
<path d="M1076 433H1090" stroke="#f60"/><path d="M1076 437H1090" stroke="#000"/><path d="M1076 445H1090" stroke="#f60"/>
<path d="M1077 456V467M1081 456V467M1085 456V467M1089 456V467"/>
<path d="M1076 489L1091 478M1076 489L1091 483M1076 489L1090 489"/>
<path d="M1076 513A8 8 0 0 1 1090 513M1078.5 513A5 5 0 0 1 1087.5 513M1081 513A2.5 2.5 0 0 1 1085 513"/>
<rect x="1077.5" y="524.5" width="12" height="11"/>
<path d="M1083.5 524V536M1077 530H1090" stroke="#f60"/>
<path d="M1078 545V559H1092M1078 559L1090 547M1078 559L1092 552"/>
<path d="M1076 582L1083 574H1091M1083 570H1091M1083 572H1091M1083 576H1091"/>
<path d="M1075 590V600H1082V590M1085 590V600M1088 590V600M1091 590V600"/>
</g>
<polygon points="1087,385 1090,387 1086,393 1082,390" fill="#000"/>
<text x="1075" y="257" style="font-family:'Liberation Serif',serif;font-weight:bold;font-size:11.5px">abc</text>

<circle cx="1082" cy="646" r="5" fill="#0c0" stroke="#000"/><circle cx="1082" cy="646" r="7" fill="none" stroke="#000" stroke-dasharray="8 4"/><path d="M1079 646H1085M1082 643V649" stroke="#000" stroke-width="1.3"/><path d="M1087 651L1090 654" stroke="#f60" stroke-width="1.2"/>
<circle cx="1082" cy="669" r="5" fill="#fc0" stroke="#000"/><circle cx="1082" cy="669" r="7" fill="none" stroke="#000" stroke-dasharray="8 4"/><path d="M1079 669H1085" stroke="#000" stroke-width="1.3"/><path d="M1087 674L1090 677" stroke="#f60" stroke-width="1.2"/>
<g>
<text x="1081" y="696" style="font-family:'Liberation Sans',sans-serif;font-weight:bold;font-style:italic;font-size:12px;fill:#310;stroke:#c50;stroke-width:.35">i</text>
<text x="1079.5" y="720" style="font-family:'Liberation Sans',sans-serif;font-weight:bold;font-style:italic;font-size:12px;fill:#310;stroke:#c50;stroke-width:.35">h</text>
<text x="1079" y="743" style="font-family:'Liberation Sans',sans-serif;font-weight:bold;font-style:italic;font-size:12px;fill:#310;stroke:#c50;stroke-width:.35">d</text>
<text x="1078" y="765" style="font-family:'Liberation Sans',sans-serif;font-weight:bold;font-style:italic;font-size:12px;fill:#310;stroke:#c50;stroke-width:.35">w</text>
<text x="1077" y="788" style="font-family:'Liberation Sans',sans-serif;font-weight:bold;font-style:italic;font-size:12px;fill:#310;stroke:#c50;stroke-width:.35">m</text>
</g>
<rect x="1072.5" y="750" width="22" height="23" fill="none" stroke="#39f" stroke-width="1.2"/>
</svg>
</body></html>
